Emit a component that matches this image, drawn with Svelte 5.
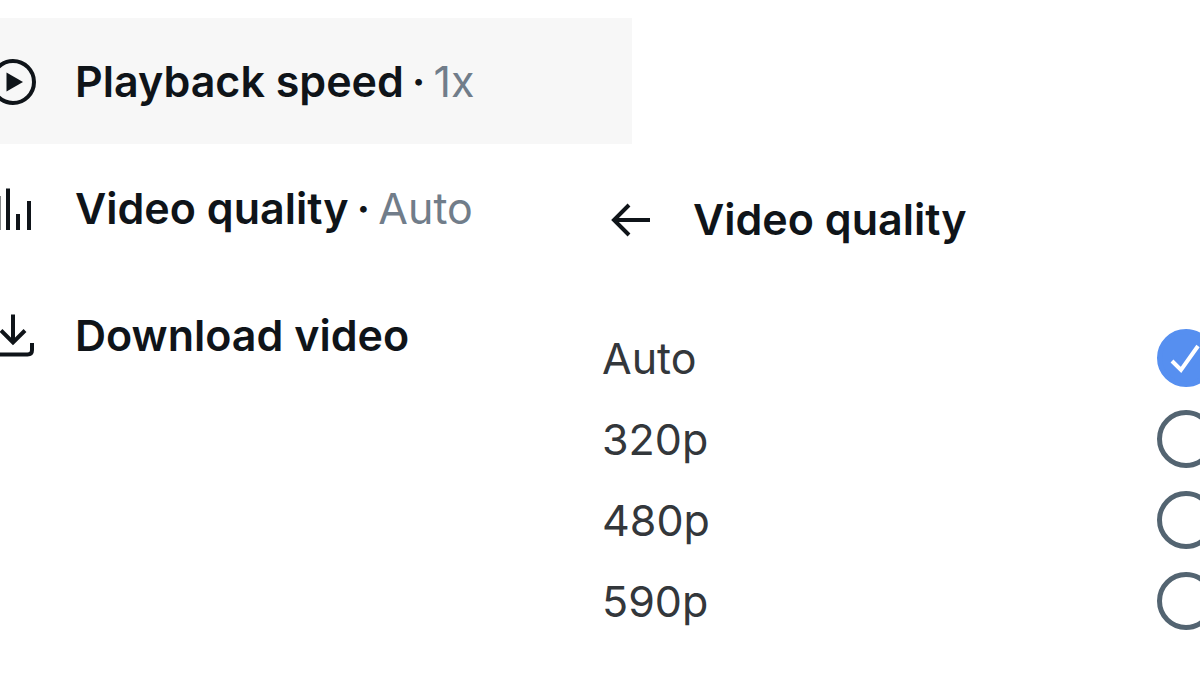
<script lang="ts">
	const settings = [
		{ id: 'speed', label: 'Playback speed', value: '1x' },
		{ id: 'quality', label: 'Video quality', value: 'Auto' },
		{ id: 'download', label: 'Download video', value: '' }
	];
	const qualities = ['Auto', '320p', '480p', '590p'];

	let active = $state('speed');
	let quality = $state('Auto');
</script>

<main class="player-settings">
	<nav class="menu" aria-label="Video settings">
		{#each settings as item (item.id)}
			<button
				class="menu-item"
				class:active={active === item.id}
				type="button"
				onclick={() => (active = item.id)}
			>
				<svg class="icon" viewBox="0 0 48 48" aria-hidden="true">
					{#if item.id === 'speed'}
						<circle cx="24" cy="25" r="21" />
						<path class="solid" d="M17.5 15.5 34 25 17.5 34.5z" />
					{:else if item.id === 'quality'}
						<path d="M9.5 12v34M19 4.500v41.500M29 30v16M40 17v29" />
					{:else}
						<path d="M24 3.500v28M12 19.500l12 12 12-12M4.500 43.500h34q4.500 0 4.500-4.500v-7" />
					{/if}
				</svg>
				<span class="label">
					{item.label}{#if item.value}<span class="dot">·</span><span class="value">{item.value}</span>{/if}
				</span>
			</button>
		{/each}
	</nav>

	<section class="panel">
		<header class="panel-header">
			<button class="back" type="button" aria-label="Back">
				<svg class="arrow" viewBox="0 0 40 40" aria-hidden="true">
					<path d="M39 21H3M18 6 3 21l15 15" />
				</svg>
			</button>
			<h1 class="title">Video quality</h1>
		</header>

		<div class="options" role="radiogroup" aria-label="Video quality">
			{#each qualities as option (option)}
				<label class="option">
					<span>{option}</span>
					<span class="control">
						<input class="radio" type="radio" name="quality" value={option} bind:group={quality} />
						{#if quality === option}
							<svg class="check" viewBox="0 0 58 58" aria-hidden="true">
								<path d="M15 32l9 9 17-24" />
							</svg>
						{/if}
					</span>
				</label>
			{/each}
		</div>
	</section>
</main>

<style>
	:global(body) {
		margin: 0;
		background: #fff;
	}

	.player-settings {
		display: grid;
		grid-template-columns: 1fr 1fr;
		overflow: hidden;
		font-family: Inter, 'Liberation Sans', sans-serif;
		font-size: 43px;
		line-height: 52px;
		color: #0f1419;
	}

	button {
		border: 0;
		background: none;
		font: inherit;
		color: inherit;
		cursor: pointer;
	}

	.menu {
		display: flex;
		flex-direction: column;
		gap: 1px;
		padding-top: 18px;
		margin: 0 -32px 0 -11px;
	}

	.menu-item {
		display: flex;
		align-items: center;
		gap: 38px;
		min-height: 126px;
		padding: 0;
		text-align: left;
		white-space: nowrap;
	}

	.menu-item.active {
		background: #f7f7f7;
	}

	.icon,
	.arrow,
	.check {
		fill: none;
		stroke: currentColor;
		stroke-width: 4;
	}

	.icon {
		flex: none;
		width: 48px;
		height: 48px;
	}

	.solid {
		fill: currentColor;
		stroke: none;
	}

	.label,
	.title {
		font-weight: 600;
	}

	.dot {
		margin: 0 8px;
	}

	.value {
		font-weight: 400;
		color: #717d8a;
	}

	.panel {
		padding: 193px 0 0 2px;
	}

	.panel-header {
		display: flex;
		align-items: center;
		gap: 42px;
		padding-left: 9px;
		margin-bottom: 72px;
		/* sits above the highlighted menu row where the two overlap */
		position: relative;
	}

	.back {
		display: flex;
		padding: 0;
	}

	.arrow {
		width: 40px;
		height: 40px;
	}

	.title {
		margin: 0;
		font-size: 43px;
	}

	.options {
		margin-right: -15px;
	}

	.option {
		display: flex;
		align-items: center;
		justify-content: space-between;
		height: 81px;
		font-weight: 400;
		color: #33373b;
		cursor: pointer;
	}

	.control {
		display: grid;
	}

	.control > * {
		grid-area: 1 / 1;
	}

	.radio {
		appearance: none;
		box-sizing: border-box;
		width: 58px;
		height: 58px;
		margin: 0;
		border: 5px solid #536471;
		border-radius: 50%;
	}

	.radio:checked {
		border-color: #568ff0;
		background: #568ff0;
	}

	.check {
		width: 58px;
		height: 58px;
		color: #fff;
		pointer-events: none;
	}
</style>
